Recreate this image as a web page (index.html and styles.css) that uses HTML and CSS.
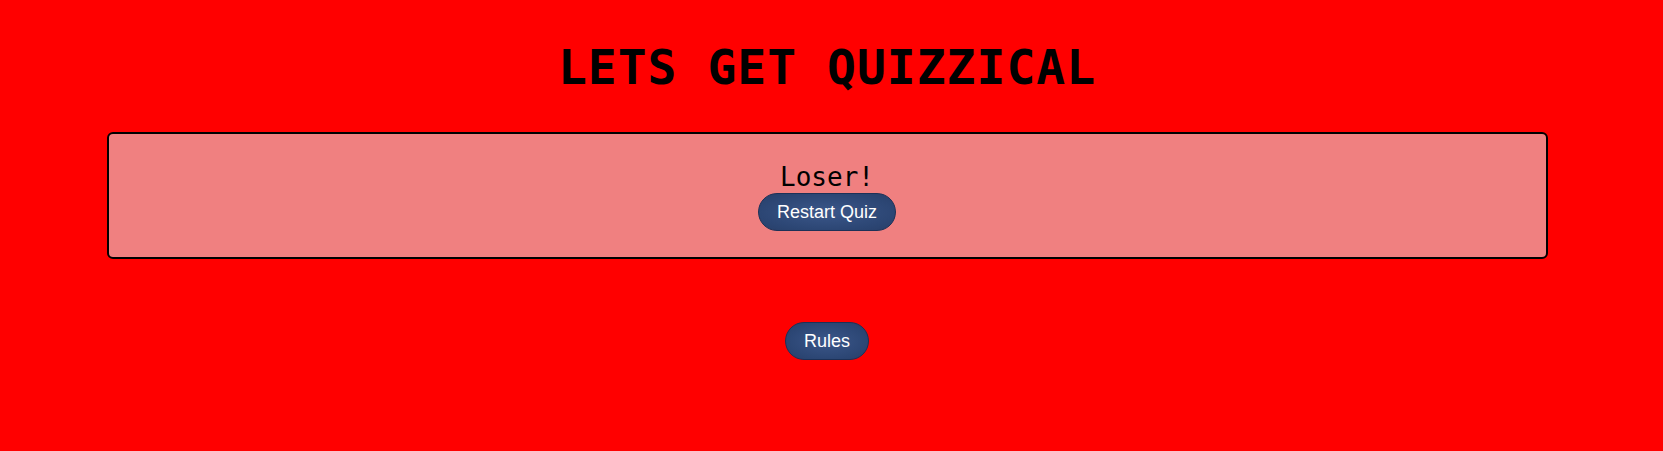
FILE: index.html
```html
<!DOCTYPE html>
<html lang="en">
<head>
<meta charset="utf-8">
<title>Quizzical</title>
<link rel="stylesheet" href="styles.css">
</head>
<body>
<main class="page">
  <h1 class="title">LETS GET QUIZZICAL</h1>
  <section class="result-card">
    <p class="result-text">Loser!</p>
    <button class="pill-btn" type="button">Restart Quiz</button>
  </section>
  <button class="pill-btn rules-btn" type="button">Rules</button>
</main>
</body>
</html>
```
FILE: styles.css
```css
html, body {
  margin: 0;
  padding: 0;
  background: #ff0000;
}

.page {
  display: flex;
  flex-direction: column;
  align-items: center;
  padding: 39px 9px 40px 0;
}

.title {
  margin: 0;
  font-family: "DejaVu Sans Mono", "Liberation Mono", monospace;
  font-size: 48px;
  line-height: 56px;
  font-weight: bold;
  letter-spacing: 1px;
  color: #000;
}

.result-card {
  box-sizing: border-box;
  width: 1441px;
  margin-top: 37px;
  padding: 27px 0 26px;
  background: #f08080;
  border: 2px solid #000;
  border-radius: 6px;
  display: flex;
  flex-direction: column;
  align-items: center;
}

.result-text {
  margin: 0;
  font-family: "DejaVu Sans Mono", "Liberation Mono", monospace;
  font-size: 26px;
  line-height: 32px;
  letter-spacing: 0;
  color: #000;
}

.pill-btn {
  font-family: "Liberation Sans", Arial, sans-serif;
  font-size: 18px;
  line-height: 20px;
  color: #ffffff;
  padding: 8px 18px;
  border: 1px solid #1d3157;
  border-radius: 20px;
  background: radial-gradient(ellipse at center, #3b578a 0%, #2c4674 70%, #283f69 100%);
  cursor: pointer;
}

.rules-btn {
  margin-top: 63px;
}
```
